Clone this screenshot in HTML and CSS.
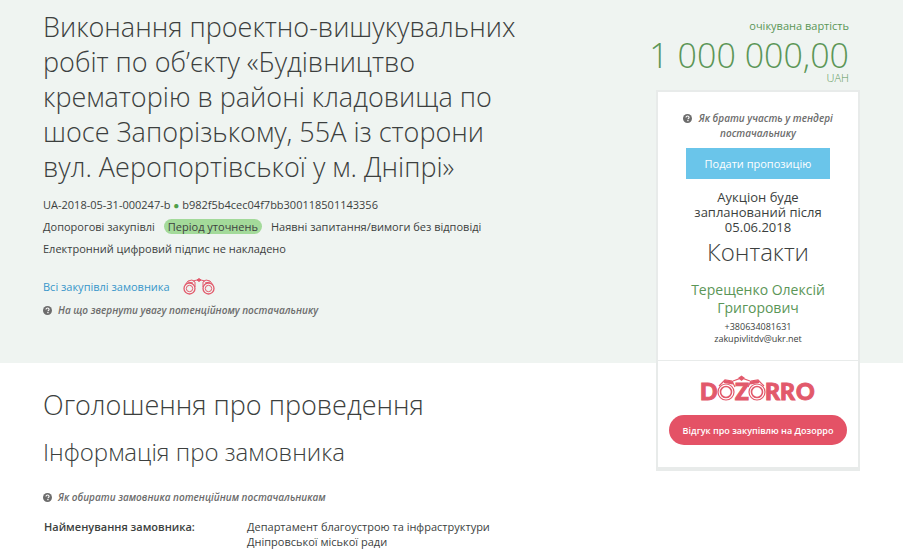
FILE: index.html
```html
<!DOCTYPE html>
<html lang="uk">
<head>
    <meta charset="UTF-8">
    <meta name="viewport" content="width=device-width, initial-scale=1.0">
    <title>UA-2018-05-31-000247-b</title>
    <link rel="stylesheet" href="styles.css">
</head>
<body>
    <svg class="sprite" width="0" height="0">
        <symbol id="icon-help" viewBox="0 0 12 12">
            <circle cx="6" cy="6" r="6" fill="#6c6c6c"/>
            <path d="M4 4.6C4 3.2 5 2.6 6 2.6s2.1.7 2.1 1.9c0 1.300-1.500 1.400-1.500 2.600" fill="none" stroke="#fff" stroke-width="1.500"/>
            <rect x="5.700" y="8" width="1.700" height="1.600" fill="#fff"/>
        </symbol>
    </svg>
    <div class="page">
        <header class="tender">
            <div class="tender-info">
                <h1>Виконання проектно-вишукувальних робіт по об’єкту «Будівництво крематорію в районі кладовища по шосе Запорізькому, 55А із сторони вул. Аеропортівської у м. Дніпрі»</h1>
                <div class="tender-line">UA-2018-05-31-000247-b <span class="dot">●</span> b982f5b4cec04f7bb300118501143356</div>
                <div class="tender-line tender-status">
                    <span>Допорогові закупівлі</span>
                    <span class="badge">Період уточнень</span>
                    <span>Наявні запитання/вимоги без відповіді</span>
                </div>
                <div class="tender-line">Електронний цифровий підпис не накладено</div>
                <div class="customer-links">
                    <a href="#">Всі закупівлі замовника</a>
                    <svg class="binoculars" viewBox="0 0 32 17" fill="none" stroke="#e2596b">
                        <circle cx="6.500" cy="10.500" r="5.500" stroke-width="1.300"/>
                        <circle cx="6.500" cy="10.500" r="3.200" stroke-width="1"/>
                        <circle cx="25.500" cy="10.500" r="5.500" stroke-width="1.300"/>
                        <circle cx="25.500" cy="10.500" r="3.200" stroke-width="1"/>
                        <path d="M2 7l3-4 4-1 3 2v5M30 7l-3-4-4-1-3 2v5M5 4l5 1M27 4l-5 1"/>
                        <path d="M10 3l4-1h4l4 1"/>
                        <path d="M14 2l2-1.500L18 2l-2 1.500z" fill="#e2596b"/>
                    </svg>
                </div>
                <a class="hint" href="#"><svg class="icon"><use href="#icon-help"/></svg><span>На що звернути увагу потенційному постачальнику</span></a>
            </div>
        </header>

        <main class="announcement">
            <h2>Оголошення про проведення</h2>
            <h3>Інформація про замовника</h3>
            <a class="hint" href="#"><svg class="icon"><use href="#icon-help"/></svg><span>Як обирати замовника потенційним постачальникам</span></a>
            <table class="details">
                <tr>
                    <th scope="row">Найменування замовника:</th>
                    <td>Департамент благоустрою та інфраструктури Дніпровської міської ради</td>
                </tr>
            </table>
        </main>

        <aside class="sidebar">
            <div class="price">
                <div class="price-label">очікувана вартість</div>
                <div class="price-value">1 000 000,00</div>
                <div class="price-currency">UAH</div>
            </div>
            <div class="card">
                <div class="card-main">
                    <a class="hint hint-center" href="#"><svg class="icon"><use href="#icon-help"/></svg> Як брати участь у тендері постачальнику</a>
                    <button class="btn-offer" type="button">Подати пропозицію</button>
                    <p class="auction">Аукціон буде запланований після 05.06.2018</p>
                    <h2 class="contacts-title">Контакти</h2>
                    <div class="contact-name">Терещенко Олексій Григорович</div>
                    <div class="contact-line">+380634081631</div>
                    <div class="contact-line">zakupivlitdv@ukr.net</div>
                </div>
                <div class="card-dozorro">
                    <svg class="dozorro" viewBox="0 -4 116 36" role="img" aria-label="Dozorro">
                        <g class="dozorro-text">
                            <text x="0" y="24">D</text>
                            <text x="35" y="24">Z</text>
                            <text x="65" y="24">R</text>
                            <text x="80" y="24">R</text>
                            <text x="96" y="24">O</text>
                        </g>
                        <g fill="none" stroke="#e2596b">
                            <circle cx="26" cy="16" r="8" stroke-width="1.200"/>
                            <circle cx="26" cy="16" r="5.500" stroke-width="1.600"/>
                            <circle cx="57" cy="16" r="8" stroke-width="1.200"/>
                            <circle cx="57" cy="16" r="5.500" stroke-width="1.600"/>
                            <path d="M33 5l8.500-3L50 5" stroke-width="1.200"/>
                            <path d="M19 10l6-6 7 1 3 6M64 10l-6-6-7 1-3 6" stroke-width="1.200"/>
                            <path d="M24 5.500l9 1.500M59 5.500L50 7" stroke-width="3"/>
                        </g>
                        <path d="M38 2l3.500-2.500L45 2l-3.500 3z" fill="#e2596b"/>
                    </svg>
                    <button class="btn-review" type="button">Відгук про закупівлю на Дозорро</button>
                </div>
            </div>
        </aside>
    </div>
</body>
</html>
```

FILE: styles.css
```css
* {
    box-sizing: border-box;
}
body {
    margin: 0;
    font-family: "Open Sans", "Liberation Sans", sans-serif;
    font-size: 11px;
    line-height: 15px;
    color: #3c3f3e;
    background-color: #fff;
}
h1, h2, h3, p {
    margin: 0;
    font-weight: 300;
}
a {
    color: #3796ca;
    text-decoration: none;
}
button {
    border: none;
    font-family: inherit;
    color: #fff;
    cursor: pointer;
}
.sprite {
    position: absolute;
}
.page {
    display: grid;
    grid-template-columns: 1fr 204px 43px;
    grid-template-rows: auto 1fr;
}

/* tender header */
.tender {
    grid-column: 1 / -1;
    grid-row: 1;
    padding: 9px 367px 45px 43px;
    background-color: #eff4f1;
}
h1 {
    margin-bottom: 13px;
    font-size: 27px;
    line-height: 35px;
}
.tender-line {
    margin-bottom: 7px;
}
.tender-status {
    display: flex;
    gap: 9px;
}
.dot {
    color: #4f9f4a;
    font-size: 10px;
    line-height: 10px;
}
.badge {
    padding: 0 4px;
    border-radius: 8px;
    background-color: #a3da9a;
}
.customer-links {
    display: flex;
    align-items: center;
    gap: 13px;
    margin: 22px 0 8px;
    font-weight: 500;
}
.binoculars {
    width: 32px;
    height: 17px;
}
.hint {
    display: flex;
    align-items: center;
    gap: 6px;
    font-size: 10px;
    font-style: italic;
    font-weight: 600;
    color: #6c6c6c;
}
.icon {
    width: 9px;
    height: 9px;
}

/* announcement */
.announcement {
    grid-column: 1;
    grid-row: 2;
    padding: 25px 120px 6px 43px;
}
.announcement h2 {
    font-size: 27px;
    line-height: 34px;
}
.announcement h3 {
    margin: 14px 0 22px;
    font-size: 24px;
    line-height: 32px;
}
.details {
    width: 100%;
    margin-top: 14px;
    border-collapse: collapse;
}
.details th, .details td {
    padding: 0 1px;
    text-align: left;
    vertical-align: top;
}
.details th {
    width: 203px;
    font-weight: 600;
}

/* sidebar */
.sidebar {
    grid-column: 2;
    grid-row: 1 / 3;
    padding-top: 18px;
}
.price {
    display: flex;
    flex-direction: column;
    align-items: flex-end;
    padding: 0 11px 7px 0;
    white-space: nowrap;
    color: #5b9657;
}
.price-value {
    margin-top: 5px;
    font-size: 34px;
    font-weight: 300;
    line-height: 34px;
}
.price-currency {
    font-weight: 300;
    line-height: 11px;
}
.card {
    border: 2px solid #e8ebea;
    border-bottom-width: 4px;
    background-color: #fff;
    text-align: center;
}
.card-main {
    padding: 19px 14px 15px;
}
.hint-center {
    display: block;
}
.hint-center .icon {
    margin-right: 4px;
    vertical-align: -1px;
}
.btn-offer {
    width: 144px;
    height: 31px;
    margin: 7px 0 11px;
    padding: 0;
    background-color: #6ac5ea;
    font-size: 11px;
}
.auction {
    font-size: 13px;
    font-weight: 400;
    line-height: 15px;
}
.contacts-title {
    font-size: 24px;
    line-height: 34px;
}
.contact-name {
    margin: 12px 14px 4px;
    font-size: 14px;
    line-height: 18px;
    color: #5b9657;
}
.contact-line {
    font-size: 9px;
    line-height: 12px;
}
.card-dozorro {
    padding: 11px 11px 22px;
    border-top: 1px solid #e8ebea;
}
.dozorro {
    display: block;
    width: 116px;
    height: 36px;
    margin: 0 auto 7px;
}
.dozorro-text {
    font-family: Lato, "Open Sans", sans-serif;
    font-size: 23px;
    font-weight: 900;
    fill: #e2596b;
    stroke: #e2596b;
}
.btn-review {
    width: 100%;
    height: 30px;
    padding: 0;
    border-radius: 15px;
    background-color: #e45266;
    font-size: 9px;
    font-weight: 600;
}
```
